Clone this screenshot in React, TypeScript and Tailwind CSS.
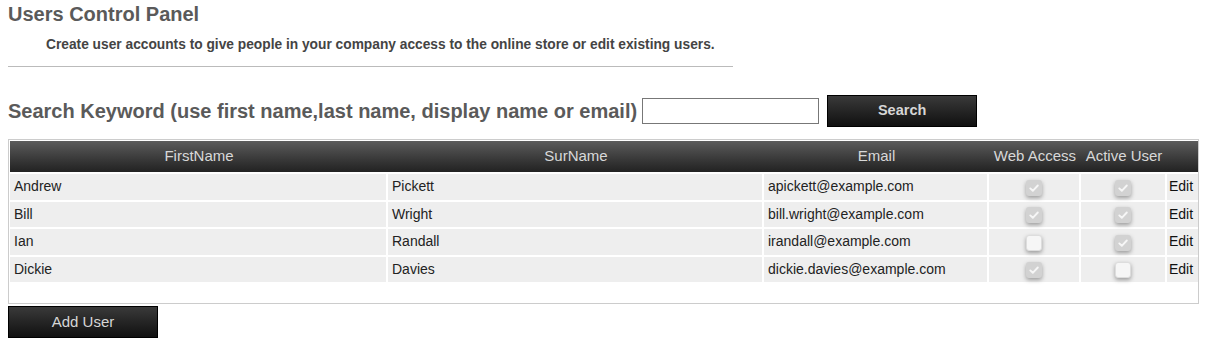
import React from 'react'

type User = {
  first: string
  last: string
  email: string
  web: boolean
  active: boolean
}

const users: User[] = [
  { first: 'Andrew', last: 'Pickett', email: 'apickett@example.com', web: true, active: true },
  { first: 'Bill', last: 'Wright', email: 'bill.wright@example.com', web: true, active: true },
  { first: 'Ian', last: 'Randall', email: 'irandall@example.com', web: false, active: true },
  { first: 'Dickie', last: 'Davies', email: 'dickie.davies@example.com', web: true, active: false },
]

function Check({ checked }: { checked: boolean }) {
  return (
    <span
      className={`inline-flex h-[16px] w-[16px] items-center justify-center rounded-[3px] align-middle shadow-[0_2px_4px_rgba(0,0,0,0.35)] ${
        checked ? 'bg-[#d2d2d2]' : 'bg-[#f6f6f6] border border-[#ddd]'
      }`}
    >
      {checked && (
        <svg viewBox="0 0 12 12" className="h-[12px] w-[12px]">
          <path d="M2.3 6.4l2.5 2.4L9.8 3.5" fill="none" stroke="#f6f6f6" strokeWidth="1.9" strokeLinecap="round" strokeLinejoin="round" />
        </svg>
      )}
    </span>
  )
}

export default function App() {
  return (
    <div className="min-h-[342px] bg-white px-2 font-['Liberation_Sans',Arial,sans-serif]">
      <h1 className="pt-[2px] text-[20px] font-bold leading-[24px] text-[#5a5a5a]">Users Control Panel</h1>
      <p className="mt-[11px] pl-[38px] text-[13.75px] font-bold leading-[16px] text-[#444]">
        Create user accounts to give people in your company access to the online store or edit existing users.
      </p>
      <div className="mt-[13px] h-px w-[725px] bg-[#bbb]" />

      <div className="mt-[28px] flex items-center">
        <h2 className="text-[20px] font-bold leading-[24px] text-[#5a5a5a]">
          Search Keyword (use first name,last name, display name or email)
        </h2>
        <input type="text" className="ml-[5px] h-[26px] w-[177px] border border-[#777] bg-white px-1 text-[13px] outline-none" />
        <button className="ml-[8px] h-[32px] w-[150px] border border-[#000] bg-gradient-to-b from-[#3a3a3a] to-[#111] text-[14.5px] font-bold text-[#d6d6d6]">
          Search
        </button>
      </div>

      <div className="mt-[12px] h-[165px] w-[1191px] border border-[#ccc] p-px">
        <table className="w-[1188px] table-fixed border-separate border-spacing-0 text-[14px] text-[#222]">
          <colgroup>
            <col className="w-[378px]" />
            <col className="w-[376px]" />
            <col className="w-[225px]" />
            <col className="w-[92px]" />
            <col className="w-[86px]" />
            <col className="w-[31px]" />
          </colgroup>
          <thead>
            <tr className="bg-gradient-to-b from-[#5c5c5c] to-[#222] text-[15px] font-normal text-[#d8d8d8]">
              <th className="h-[31px] font-normal">FirstName</th>
              <th className="font-normal">SurName</th>
              <th className="font-normal">Email</th>
              <th className="whitespace-nowrap font-normal">Web Access</th>
              <th className="whitespace-nowrap font-normal">Active User</th>
              <th className="font-normal"></th>
            </tr>
          </thead>
          <tbody>
            {users.map((u) => (
              <tr key={u.email} className="bg-[#eee]">
                <td className="h-[27.5px] border-r-2 border-t-2 border-white pl-[4px]">{u.first}</td>
                <td className="border-r-2 border-t-2 border-white pl-[4px]">{u.last}</td>
                <td className="border-r-2 border-t-2 border-white pl-[4px]">{u.email}</td>
                <td className="border-r-2 border-t-2 border-white text-center">
                  <Check checked={u.web} />
                </td>
                <td className="border-r-2 border-t-2 border-white text-center">
                  <Check checked={u.active} />
                </td>
                <td className="border-t-2 border-white pl-[2px] text-[#111]">Edit</td>
              </tr>
            ))}
          </tbody>
        </table>
      </div>

      <button className="mt-[2px] h-[32px] w-[150px] border border-[#000] bg-gradient-to-b from-[#3a3a3a] to-[#111] text-[15px] text-[#d6d6d6]">
        Add User
      </button>
    </div>
  )
}
